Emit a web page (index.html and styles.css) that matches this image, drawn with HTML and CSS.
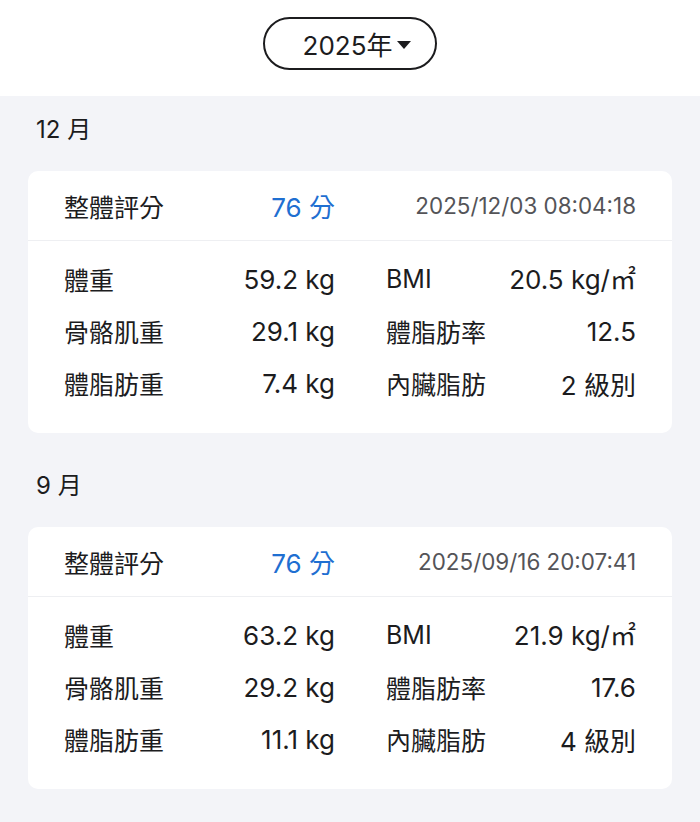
FILE: index.html
```html
<!DOCTYPE html>
<html lang="zh-Hant">
<head>
<meta charset="utf-8">
<link rel="stylesheet" href="styles.css">
</head>
<body>
<header class="top">
  <button class="year-picker"><span class="year-text">2025年</span><span class="caret"></span></button>
</header>
<main class="list">
  <section class="month">
    <h2 class="month-title">12 月</h2>
    <div class="card">
      <div class="card-head">
        <span class="label">整體評分</span>
        <span class="score">76 分</span>
        <span class="date">2025/12/03 08:04:18</span>
      </div>
      <div class="card-body">
        <span class="label">體重</span><span class="value">59.2 kg</span>
        <span class="label col2">BMI</span><span class="value">20.5 kg/<span class="unit">㎡</span></span>
        <span class="label">骨骼肌重</span><span class="value">29.1 kg</span>
        <span class="label col2">體脂肪率</span><span class="value">12.5</span>
        <span class="label">體脂肪重</span><span class="value">7.4 kg</span>
        <span class="label col2">內臟脂肪</span><span class="value">2 級別</span>
      </div>
    </div>
  </section>
  <section class="month">
    <h2 class="month-title">9 月</h2>
    <div class="card">
      <div class="card-head">
        <span class="label">整體評分</span>
        <span class="score">76 分</span>
        <span class="date">2025/09/16 20:07:41</span>
      </div>
      <div class="card-body">
        <span class="label">體重</span><span class="value">63.2 kg</span>
        <span class="label col2">BMI</span><span class="value">21.9 kg/<span class="unit">㎡</span></span>
        <span class="label">骨骼肌重</span><span class="value">29.2 kg</span>
        <span class="label col2">體脂肪率</span><span class="value">17.6</span>
        <span class="label">體脂肪重</span><span class="value">11.1 kg</span>
        <span class="label col2">內臟脂肪</span><span class="value">4 級別</span>
      </div>
    </div>
  </section>
</main>
</body>
</html>
```
FILE: styles.css
```css
html, body {
  margin: 0;
  padding: 0;
}
body {
  width: 700px;
  min-height: 822px;
  background: #f3f4f8;
  font-family: "Inter", "Noto Sans CJK TC", sans-serif;
  color: #1c1c1e;
}
.top {
  background: #ffffff;
  height: 96px;
  display: flex;
  justify-content: center;
  align-items: flex-start;
  padding-top: 17px;
  box-sizing: border-box;
}
.year-picker {
  width: 174px;
  height: 53px;
  border: 2px solid #1c1c1e;
  border-radius: 27px;
  background: #fff;
  display: flex;
  align-items: center;
  justify-content: center;
  padding: 0 0 0 14px;
  gap: 5px;
  font-family: inherit;
  color: #1c1c1e;
}
.year-text {
  font-size: 26px;
}
.caret {
  width: 0;
  height: 0;
  border-left: 7.5px solid transparent;
  border-right: 7.5px solid transparent;
  border-top: 8px solid #1c1c1e;
  margin-top: 2px;
}
.list {
  padding: 0 28px 20px;
}
.month {
  padding-top: 17px;
}
.month-title {
  margin: 0 0 24px 8px;
  font-size: 24px;
  font-weight: 400;
  line-height: 34px;
}
.card {
  background: #fff;
  border-radius: 10px;
  margin-bottom: 19px;
}
.card-head {
  display: grid;
  grid-template-columns: 171px 100px 301px;
  align-items: center;
  padding: 0 36px;
  height: 69px;
  border-bottom: 1px solid #eeeff2;
}
.card-body {
  display: grid;
  grid-template-columns: 150px 121px 181px 120px;
  grid-auto-rows: 52px;
  align-items: center;
  padding: 12px 36px 24px;
}
.label {
  font-size: 25px;
  justify-self: start;
  white-space: nowrap;
}
.card-body .label.col2 {
  margin-left: 51px;
}
.score {
  font-size: 26px;
  color: #1f6fd1;
  justify-self: end;
  white-space: nowrap;
}
.date {
  font-size: 22.4px;
  color: #545458;
  justify-self: end;
  white-space: nowrap;
}
.value {
  font-size: 26px;
  justify-self: end;
  white-space: nowrap;
}
.unit {
  font-family: "Noto Sans CJK TC", sans-serif;
  line-height: 0;
}
```
